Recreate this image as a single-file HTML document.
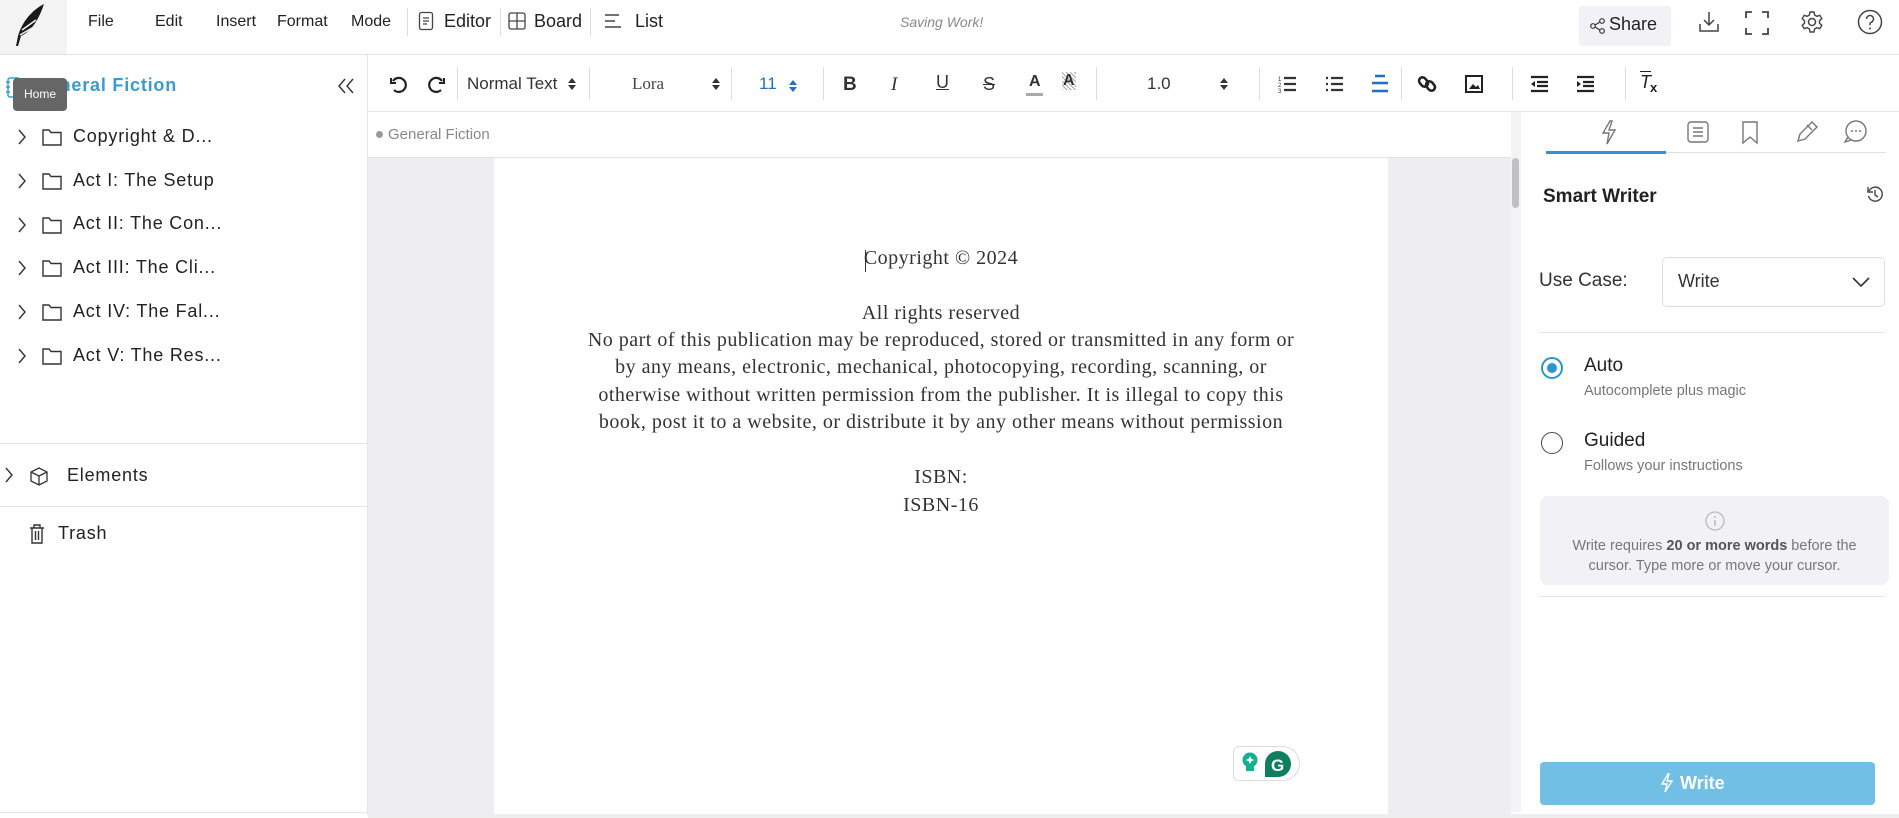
<!DOCTYPE html>
<html><head><meta charset="utf-8">
<style>
*{box-sizing:border-box;margin:0;padding:0}
body{width:1899px;height:818px;overflow:hidden;background:#fff;font-family:"Liberation Sans",sans-serif;color:#222;position:relative}
.a{position:absolute}
.t{position:absolute;white-space:nowrap}
.sep{position:absolute;width:1px;background:#ddd}
svg{position:absolute;overflow:visible}
.doc{position:absolute;left:494px;width:894px;text-align:center;font-family:"Liberation Serif",serif;font-size:20px;color:#333;white-space:nowrap;letter-spacing:0.5px}
.tree{position:absolute;left:0;font-size:18px;color:#222;white-space:nowrap;letter-spacing:0.8px}
</style></head><body>

<!-- Header -->
<div class="a" style="left:0;top:0;width:1899px;height:55px;border-bottom:1px solid #e2e2e2"></div>
<div class="a" style="left:0;top:0;width:67px;height:54px;background:#f3f3f3"></div>
<svg style="left:8px;top:2px" width="40" height="48" viewBox="0 0 40 48"><path d="M36 2 C24 8 14 20 10 34 L8 44 L10 44 L13 34 C22 30 30 20 36 2Z" fill="#1a1a1a"/><path d="M14 28 L28 18 M12 33 L24 26" stroke="#f3f3f3" stroke-width="1.5"/></svg>
<div class="t" style="left:88px;top:13px;font-size:16px">File</div>
<div class="t" style="left:155px;top:13px;font-size:16px">Edit</div>
<div class="t" style="left:216px;top:13px;font-size:16px">Insert</div>
<div class="t" style="left:277px;top:13px;font-size:16px">Format</div>
<div class="t" style="left:351px;top:13px;font-size:16px">Mode</div>
<div class="sep" style="left:407px;top:8px;height:28px"></div>
<svg style="left:418px;top:11px" width="16" height="20"><rect x="1.5" y="1.5" width="13" height="17" rx="2" fill="none" stroke="#444" stroke-width="1.3"/><path d="M5 7h6M5 10h6M5 13h4" stroke="#444" stroke-width="1.2"/></svg>
<div class="t" style="left:444px;top:11px;font-size:18px">Editor</div>
<div class="sep" style="left:500px;top:8px;height:28px"></div>
<svg style="left:508px;top:12px" width="18" height="18"><rect x="1" y="1" width="16" height="16" rx="2" fill="none" stroke="#444" stroke-width="1.3"/><path d="M9 1v16M1 9h16" stroke="#444" stroke-width="1.3"/></svg>
<div class="t" style="left:534px;top:11px;font-size:18px">Board</div>
<div class="sep" style="left:590px;top:8px;height:28px"></div>
<svg style="left:604px;top:13px" width="18" height="16"><path d="M1 2h14M1 8h10M1 14h16" stroke="#444" stroke-width="1.4"/></svg>
<div class="t" style="left:635px;top:11px;font-size:18px">List</div>
<div class="t" style="left:900px;top:14px;font-size:14px;font-style:italic;color:#888">Saving Work!</div>
<div class="a" style="left:1579px;top:6px;width:92px;height:40px;background:#f2f2f6;border-radius:3px"></div>
<svg style="left:1590px;top:18px" width="16" height="16"><circle cx="3" cy="8" r="2.3" fill="none" stroke="#333" stroke-width="1.2"/><circle cx="12" cy="3" r="2.3" fill="none" stroke="#333" stroke-width="1.2"/><circle cx="12" cy="13" r="2.3" fill="none" stroke="#333" stroke-width="1.2"/><path d="M5 7L10 4M5 9L10 12" stroke="#333" stroke-width="1.2"/></svg>
<div class="t" style="left:1609px;top:14px;font-size:18px">Share</div>
<svg style="left:1697px;top:10px" width="24" height="24"><path d="M12 2v13M7 10l5 5 5-5" fill="none" stroke="#444" stroke-width="1.5"/><path d="M3 14v7h18v-7" fill="none" stroke="#444" stroke-width="1.5"/></svg>
<svg style="left:1745px;top:11px" width="24" height="24"><path d="M1 7V1h6M17 1h6v6M23 17v6h-6M7 23H1v-6" fill="none" stroke="#444" stroke-width="1.8"/></svg>
<svg style="left:1800px;top:10px" width="24" height="24"><circle cx="12" cy="12" r="3.5" fill="none" stroke="#444" stroke-width="1.5"/><path d="M10 2h4l.6 3 2.3 1.3 2.9-1 2 3.4-2.3 2 0 2.6 2.3 2-2 3.4-2.9-1-2.3 1.3-.6 3h-4l-.6-3-2.3-1.3-2.9 1-2-3.4 2.3-2 0-2.6-2.3-2 2-3.4 2.9 1L9.4 5z" fill="none" stroke="#444" stroke-width="1.4"/></svg>
<svg style="left:1857px;top:9px" width="26" height="26"><circle cx="13" cy="13" r="11.5" fill="none" stroke="#444" stroke-width="1.5"/><path d="M9.5 10a3.5 3.5 0 1 1 4.5 3.3c-.8.3-1 1-1 2v1" fill="none" stroke="#444" stroke-width="1.5"/><circle cx="13" cy="19.5" r="1" fill="#444"/></svg>

<!-- Sidebar -->
<div class="a" style="left:367px;top:55px;width:1px;height:760px;background:#e4e4e4"></div>
<svg style="left:5px;top:77px" width="18" height="22"><rect x="3" y="1" width="12" height="19" rx="2" fill="none" stroke="#3a9bd0" stroke-width="1.5"/><path d="M1 5h4M1 10h4M1 15h4" stroke="#3a9bd0" stroke-width="1.5"/></svg>
<div class="t" style="left:34px;top:75px;font-size:18px;font-weight:bold;color:#3a9bd0;letter-spacing:0.8px">General Fiction</div>
<div class="a" style="left:13px;top:78px;width:54px;height:33px;background:#666;border-radius:4px;color:#fff;font-size:12px;line-height:33px;text-align:center">Home</div>
<svg style="left:336px;top:78px" width="20" height="16"><path d="M9 1L3 8l6 7M17 1l-6 7 6 7" fill="none" stroke="#333" stroke-width="1.4"/></svg>

<svg style="left:18px;top:129px" width="300" height="240">
<g fill="none" stroke="#333" stroke-width="1.4">
<path d="M1 1l6 7-6 7"/><path d="M1 1l6 7-6 7" transform="translate(0,44)"/><path d="M1 1l6 7-6 7" transform="translate(0,88)"/><path d="M1 1l6 7-6 7" transform="translate(0,131)"/><path d="M1 1l6 7-6 7" transform="translate(0,175)"/><path d="M1 1l6 7-6 7" transform="translate(0,219)"/>
<path d="M25 1h6l2 2.5h10v12.5H25z"/>
<path d="M25 1h6l2 2.5h10v12.5H25z" transform="translate(0,44)"/><path d="M25 1h6l2 2.5h10v12.5H25z" transform="translate(0,88)"/><path d="M25 1h6l2 2.5h10v12.5H25z" transform="translate(0,131)"/><path d="M25 1h6l2 2.5h10v12.5H25z" transform="translate(0,175)"/><path d="M25 1h6l2 2.5h10v12.5H25z" transform="translate(0,219)"/>
</g></svg>
<div class="tree" style="left:73px;top:126px">Copyright &amp; D...</div>
<div class="tree" style="left:73px;top:170px">Act I: The Setup</div>
<div class="tree" style="left:73px;top:213px">Act II: The Con...</div>
<div class="tree" style="left:73px;top:257px">Act III: The Cli...</div>
<div class="tree" style="left:73px;top:301px">Act IV: The Fal...</div>
<div class="tree" style="left:73px;top:345px">Act V: The Res...</div>

<div class="a" style="left:0;top:443px;width:368px;height:1px;background:#e6e6e6"></div>
<div class="a" style="left:0;top:506px;width:368px;height:1px;background:#e6e6e6"></div>
<svg style="left:4px;top:467px" width="10" height="16"><path d="M2 1l6 7-6 7" fill="none" stroke="#333" stroke-width="1.4"/></svg>
<svg style="left:29px;top:467px" width="20" height="20"><path d="M10 1l8 4v9l-8 4-8-4V5z M2 5l8 4 8-4 M10 9v9" fill="none" stroke="#333" stroke-width="1.3"/></svg>
<div class="tree" style="left:67px;top:465px">Elements</div>
<svg style="left:29px;top:524px" width="16" height="20"><path d="M1 4h14M5 4V1h6v3M3 4v15h10V4M6.5 7v9M9.5 7v9" fill="none" stroke="#333" stroke-width="1.4"/></svg>
<div class="tree" style="left:58px;top:523px">Trash</div>
<div class="a" style="left:0;top:812px;width:368px;height:1px;background:#e6e6e6"></div>

<!-- Toolbar -->
<div class="a" style="left:368px;top:111px;width:1531px;height:1px;background:#e2e2e2"></div>
<svg style="left:389px;top:75px" width="60" height="20"><g fill="none" stroke="#222" stroke-width="2.2"><path d="M4 6a7 7 0 1 1 1 9"/><path d="M2 3v5h5" stroke-width="2"/><path d="M53 6a7 7 0 1 0-1 9"/><path d="M55 3v5h-5" stroke-width="2"/></g></svg>
<div class="sep" style="left:457px;top:67px;height:33px"></div>
<div class="t" style="left:467px;top:74px;font-size:17px;color:#333">Normal Text</div>
<svg style="left:568px;top:77px" width="8" height="14"><path d="M0 6l4-5 4 5zM0 8l4 5 4-5z" fill="#333"/></svg>
<div class="sep" style="left:589px;top:67px;height:33px"></div>
<div class="t" style="left:632px;top:74px;font-size:17px;color:#444;font-family:'Liberation Serif',serif">Lora</div>
<svg style="left:712px;top:77px" width="8" height="14"><path d="M0 6l4-5 4 5zM0 8l4 5 4-5z" fill="#333"/></svg>
<div class="sep" style="left:731px;top:67px;height:33px"></div>
<div class="t" style="left:759px;top:74px;font-size:17px;color:#1f6fc5">11</div>
<svg style="left:789px;top:79px" width="8" height="14"><path d="M0 6l4-5 4 5zM0 8l4 5 4-5z" fill="#1f6fc5"/></svg>
<div class="sep" style="left:823px;top:67px;height:33px"></div>
<div class="t" style="left:843px;top:74px;font-size:19px;font-weight:bold;color:#333">B</div>
<div class="t" style="left:891px;top:74px;font-size:19px;font-style:italic;color:#333;font-family:'Liberation Serif',serif">I</div>
<div class="t" style="left:936px;top:72px;font-size:18px;text-decoration:underline;color:#333">U</div>
<div class="t" style="left:983px;top:74px;font-size:18px;text-decoration:line-through;color:#333">S</div>
<div class="t" style="left:1029px;top:73px;font-size:16px;color:#333;font-weight:bold">A</div>
<div class="a" style="left:1026px;top:93px;width:17px;height:3px;background:#aaa"></div>
<div class="t" style="left:1062px;top:72px;font-size:16px;color:#333;font-weight:bold;background:repeating-linear-gradient(45deg,#aaa 0 1px,#fff 1px 3px);padding:0 1px">A</div>
<div class="sep" style="left:1096px;top:67px;height:33px"></div>
<div class="t" style="left:1147px;top:74px;font-size:17px;color:#333">1.0</div>
<svg style="left:1220px;top:77px" width="8" height="14"><path d="M0 6l4-5 4 5zM0 8l4 5 4-5z" fill="#333"/></svg>
<div class="sep" style="left:1259px;top:67px;height:33px"></div>
<svg style="left:1278px;top:75px" width="18" height="18"><path d="M6 3h12M6 9h12M6 15h12" stroke="#333" stroke-width="2.2"/><text x="0" y="6" font-size="6" fill="#333" font-family="Liberation Sans">1</text><text x="0" y="12" font-size="6" fill="#333" font-family="Liberation Sans">2</text><text x="0" y="18" font-size="6" fill="#333" font-family="Liberation Sans">3</text></svg>
<svg style="left:1326px;top:75px" width="18" height="18"><path d="M5 3h12M5 9h12M5 15h12" stroke="#333" stroke-width="2.2"/><path d="M0 3h2M0 9h2M0 15h2" stroke="#333" stroke-width="2.2"/></svg>
<svg style="left:1371px;top:73px" width="18" height="22"><path d="M4 3h10M1 10h16M1 18h16" stroke="#1f6fc5" stroke-width="2.6"/></svg>
<div class="sep" style="left:1401px;top:67px;height:33px"></div>
<svg style="left:1418px;top:75px" width="18" height="18"><g fill="none" stroke="#222" stroke-width="2.6"><rect x="2" y="2" width="7" height="10" rx="3.5" transform="rotate(-40 5.5 7)"/><rect x="9" y="6" width="7" height="10" rx="3.5" transform="rotate(-40 12.5 11)"/></g></svg>
<svg style="left:1465px;top:75px" width="18" height="18"><rect x="1" y="1" width="16" height="16" fill="none" stroke="#222" stroke-width="2"/><path d="M4 14l4-5 3 3 2-2 2 4z" fill="#222"/></svg>
<div class="sep" style="left:1512px;top:67px;height:33px"></div>
<svg style="left:1530px;top:75px" width="18" height="18"><path d="M1 2h17M7 7h11M7 11h11M1 16h17" stroke="#222" stroke-width="2.2"/><path d="M5 6v6L1 9z" fill="#222"/></svg>
<svg style="left:1576px;top:75px" width="18" height="18"><path d="M1 2h17M7 7h11M7 11h11M1 16h17" stroke="#222" stroke-width="2.2"/><path d="M1 6v6l4-3z" fill="#222"/></svg>
<div class="sep" style="left:1625px;top:67px;height:33px"></div>
<div class="t" style="left:1640px;top:72px;font-size:18px;font-style:italic;color:#222;text-decoration:overline">T</div>
<div class="t" style="left:1650px;top:80px;font-size:13px;font-weight:bold;color:#222">x</div>

<!-- Breadcrumb & canvas -->
<div class="a" style="left:368px;top:158px;width:1143px;height:656px;background:#eeeef2"></div>
<div class="a" style="left:368px;top:157px;width:1153px;height:1px;background:#e2e2e2"></div>
<div class="a" style="left:376px;top:131px;width:7px;height:7px;border-radius:50%;background:#999"></div>
<div class="t" style="left:388px;top:126px;font-size:15px;color:#888">General Fiction</div>
<div class="a" style="left:1511px;top:112px;width:10px;height:700px;background:#f4f4f4"></div>
<div class="a" style="left:1512px;top:158px;width:7px;height:50px;background:#c1c1c1;border-radius:4px"></div>
<div class="a" style="left:494px;top:158px;width:894px;height:656px;background:#fff"></div>
<div class="a" style="left:865px;top:250px;width:1px;height:22px;background:#333"></div>
<div class="doc" style="top:247px">Copyright © 2024</div>
<div class="doc" style="top:302px">All rights reserved</div>
<div class="doc" style="top:329px">No part of this publication may be reproduced, stored or transmitted in any form or</div>
<div class="doc" style="top:356px">by any means, electronic, mechanical, photocopying, recording, scanning, or</div>
<div class="doc" style="top:384px">otherwise without written permission from the publisher. It is illegal to copy this</div>
<div class="doc" style="top:411px">book, post it to a website, or distribute it by any other means without permission</div>
<div class="doc" style="top:466px">ISBN:</div>
<div class="doc" style="top:494px">ISBN-16</div>
<!-- grammarly -->
<div class="a" style="left:1233px;top:746px;width:67px;height:35px;border:1px solid #ddd;border-radius:6px 18px 18px 6px;background:#fff"></div>
<svg style="left:1240px;top:751px" width="56" height="26"><circle cx="10" cy="9" r="7.5" fill="#15b08f"/><rect x="6" y="15" width="8" height="5" fill="#15b08f"/><path d="M10 5l1.5 3 3 1-3 1-1.5 3-1.5-3-3-1 3-1z" fill="#fff"/><rect x="25" y="0" width="26" height="26" rx="13" fill="#0d7f5f"/><rect x="25" y="13" width="13" height="13" fill="#0d7f5f"/><text x="31" y="20" font-size="17" font-weight="bold" fill="#fff" font-family="Liberation Sans">G</text></svg>

<!-- Right panel -->
<svg style="left:1598px;top:119px" width="300" height="30"><g fill="none" stroke="#777" stroke-width="1.4">
<path d="M12 2l-7 12h6l-2 11 8-14h-6l3-9z"/>
<rect x="90" y="3" width="20" height="20" rx="3"/><path d="M95 9h10M95 13h10M95 17h10"/>
<path d="M145 3h14v21l-7-6-7 6z"/>
<path d="M200 22l2-7 12-12 5 5-12 12-7 2zM209 6l5 5"/>
<circle cx="258" cy="12" r="10"/><path d="M250 18l-3 5 6-2"/></g><g fill="#777"><circle cx="254" cy="12" r="1"/><circle cx="258" cy="12" r="1"/><circle cx="262" cy="12" r="1"/></g></svg>
<div class="a" style="left:1546px;top:152px;width:340px;height:1px;background:#e0e0e0"></div>
<div class="a" style="left:1546px;top:151px;width:120px;height:3px;background:#3a8fd0"></div>
<div class="t" style="left:1543px;top:186px;font-size:19px;font-weight:bold;color:#222">Smart Writer</div>
<svg style="left:1866px;top:185px" width="18" height="18"><path d="M3 6a7 7 0 1 1 -0.5 5" fill="none" stroke="#444" stroke-width="1.4"/><path d="M2 2v5h5" fill="none" stroke="#444" stroke-width="1.4"/><path d="M9 5v5l3 2" fill="none" stroke="#444" stroke-width="1.4"/></svg>
<div class="t" style="left:1539px;top:270px;font-size:19px;color:#333">Use Case:</div>
<div class="a" style="left:1662px;top:257px;width:223px;height:50px;border:1px solid #ddd;border-radius:5px"></div>
<div class="t" style="left:1678px;top:271px;font-size:18px;color:#333">Write</div>
<svg style="left:1852px;top:276px" width="18" height="12"><path d="M1 2l8 8 8-8" fill="none" stroke="#333" stroke-width="1.6"/></svg>
<div class="a" style="left:1539px;top:332px;width:346px;height:1px;background:#e6e6e6"></div>
<div class="a" style="left:1541px;top:357px;width:22px;height:22px;border:2px solid #2b95d6;border-radius:50%"></div>
<div class="a" style="left:1547px;top:363px;width:10px;height:10px;background:#2b95d6;border-radius:50%"></div>
<div class="t" style="left:1584px;top:355px;font-size:19px;color:#222">Auto</div>
<div class="t" style="left:1584px;top:383px;font-size:14.5px;color:#777">Autocomplete plus magic</div>
<div class="a" style="left:1541px;top:432px;width:22px;height:22px;border:1.5px solid #444;border-radius:50%"></div>
<div class="t" style="left:1584px;top:430px;font-size:19px;color:#222">Guided</div>
<div class="t" style="left:1584px;top:458px;font-size:14.5px;color:#777">Follows your instructions</div>
<div class="a" style="left:1540px;top:496px;width:349px;height:89px;background:#f2f2f6;border-radius:8px"></div>
<svg style="left:1705px;top:511px" width="20" height="20"><circle cx="10" cy="10" r="9" fill="none" stroke="#bbb" stroke-width="1.3"/><circle cx="10" cy="6" r="1" fill="#bbb"/><path d="M10 9v6" stroke="#bbb" stroke-width="1.5"/></svg>
<div class="t" style="left:1540px;width:349px;text-align:center;top:538px;font-size:14.5px;color:#777">Write requires <b style="color:#555">20 or more words</b> before the</div>
<div class="t" style="left:1540px;width:349px;text-align:center;top:558px;font-size:14.5px;color:#777">cursor. Type more or move your cursor.</div>
<div class="a" style="left:1539px;top:596px;width:346px;height:1px;background:#e6e6e6"></div>
<div class="a" style="left:1521px;top:745px;width:378px;height:69px;background:#fff"></div>
<div class="a" style="left:1540px;top:762px;width:335px;height:43px;background:#72bfe5;border-radius:4px"></div>
<svg style="left:1660px;top:773px" width="14" height="20"><path d="M8 1L2 11h5l-2 8 7-11H7l2-7z" fill="none" stroke="#fff" stroke-width="1.4"/></svg>
<div class="t" style="left:1680px;top:773px;font-size:18px;font-weight:bold;color:#fff">Write</div>
<div class="a" style="left:368px;top:814px;width:1531px;height:4px;background:#eee"></div>
</body></html>
